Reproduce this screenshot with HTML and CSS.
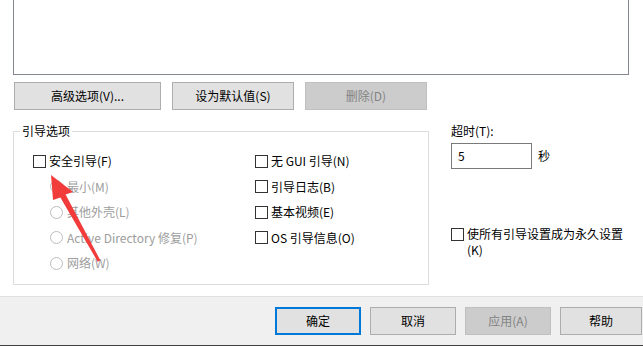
FILE: index.html
```html
<!DOCTYPE html>
<html lang="zh-CN">
<head>
<meta charset="utf-8">
<link rel="stylesheet" href="styles.css">
</head>
<body>
<div class="main">
  <div class="listbox"></div>
  <div class="btnrow">
    <button class="btn w147">高级选项(V)...</button>
    <button class="btn w122">设为默认值(S)</button>
    <button class="btn w122 disabled">删除(D)</button>
  </div>
  <div class="lower">
    <fieldset class="group">
      <legend class="legend">引导选项</legend>
      <div class="grid">
        <div class="item"><span class="chk"></span>安全引导(F)</div>
        <div class="item sub dim"><span class="radio"></span>最小(M)</div>
        <div class="item sub dim"><span class="radio"></span>其他外壳(L)</div>
        <div class="item sub dim"><span class="radio"></span>Active Directory 修复(P)</div>
        <div class="item sub dim"><span class="radio"></span>网络(W)</div>
        <div class="item"><span class="chk"></span>无 GUI 引导(N)</div>
        <div class="item"><span class="chk"></span>引导日志(B)</div>
        <div class="item"><span class="chk"></span>基本视频(E)</div>
        <div class="item"><span class="chk"></span>OS 引导信息(O)</div>
      </div>
    </fieldset>
    <div class="side">
      <div class="label">超时(T):</div>
      <div class="timeout">
        <div class="input">5</div>
        <span class="unit">秒</span>
      </div>
      <div class="perm">
        <span class="chk"></span>
        <span class="permtext">使所有引导设置成为永久设置(K)</span>
      </div>
    </div>
  </div>
</div>
<div class="footer">
  <button class="btn fbtn default">确定</button>
  <button class="btn fbtn">取消</button>
  <button class="btn fbtn disabled">应用(A)</button>
  <button class="btn fbtn last">帮助</button>
</div>
<svg class="arrow" width="643" height="346" viewBox="0 0 643 346">
  <polygon points="51,175 73,192 65.6,194.5 100.3,260.3 97.7,261.7 60.4,197.5 53,200" fill="#f23c3c"/>
</svg>
</body>
</html>
```
FILE: styles.css
```css
* { box-sizing: border-box; }
html, body { margin: 0; padding: 0; }
body {
  width: 643px;
  height: 346px;
  overflow: hidden;
  position: relative;
  background: #ffffff;
  font-family: "Noto Sans CJK SC", "Microsoft YaHei", sans-serif;
  font-size: 12px;
  line-height: 16px;
  color: #000;
}
.main {
  height: 296px;
  padding-left: 13px;
  display: flex;
  flex-direction: column;
}
.listbox {
  margin-top: -10px;
  height: 85px;
  width: 616px;
  border: 1px solid #828790;
  background: #fff;
  flex: none;
}
.btnrow {
  margin-top: 7px;
  padding-left: 1px;
  display: flex;
  gap: 11px;
}
.btn {
  height: 28px;
  padding: 0;
  margin: 0;
  background: #e1e1e1;
  border: 1px solid #adadad;
  font: inherit;
  color: #000;
  display: flex;
  align-items: center;
  justify-content: center;
}
.w147 { width: 147px; }
.w122 { width: 122px; }
.btn.disabled {
  background: #cccccc;
  border-color: #bfbfbf;
  color: #838383;
}
.lower {
  margin-top: 13px;
  display: flex;
}
.group {
  width: 416px;
  margin: 0;
  padding: 0;
  border: 1px solid #dcdcdc;
  min-inline-size: 0;
}
.legend {
  margin-left: 6px;
  padding: 0 2px;
  line-height: 16px;
}
.grid {
  display: grid;
  grid-template-columns: 222px auto;
  grid-template-rows: 26px 25px 26px 25px 26px;
  grid-auto-flow: column;
  padding: 9px 0 8px 19px;
}
.item {
  display: flex;
  align-items: center;
  white-space: nowrap;
}
.sub { padding-left: 17px; }
.dim { color: #9d9d9d; }
.chk {
  width: 13px;
  height: 13px;
  border: 1px solid #333333;
  background: #fff;
  margin-right: 3px;
  flex: none;
}
.radio {
  width: 13px;
  height: 13px;
  border: 1px solid #bcbcbc;
  border-radius: 50%;
  background: #fff;
  margin-right: 4px;
  flex: none;
}
.side {
  margin-left: 22px;
  display: flex;
  flex-direction: column;
}
.timeout {
  margin-top: 4px;
  display: flex;
  align-items: center;
}
.input {
  width: 81px;
  height: 26px;
  border: 1px solid #7a7a7a;
  padding-left: 6px;
  display: flex;
  align-items: center;
}
.unit { margin-left: 6px; }
.perm {
  margin-top: 57px;
  display: flex;
  align-items: flex-start;
}
.perm .chk { margin-top: 2px; }
.permtext { width: 160px; }
.footer {
  height: 50px;
  background: #f0f0f0;
  border-top: 1px solid #dfdfdf;
  border-bottom: 1px solid #404040;
  display: flex;
  justify-content: flex-end;
  gap: 9px;
  padding-top: 10px;
  padding-right: 1px;
}
.fbtn { width: 86px; }
.fbtn.last { width: 82px; }
.fbtn.default { border: 2px solid #0078d7; }
.arrow {
  position: absolute;
  left: 0;
  top: 0;
  pointer-events: none;
}
```
